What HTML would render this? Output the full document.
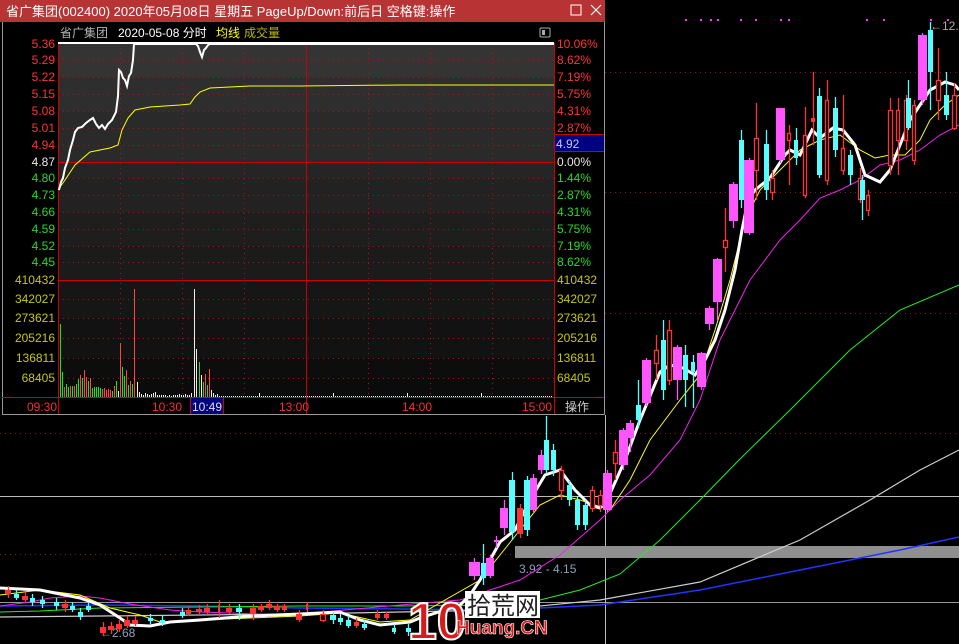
<!DOCTYPE html>
<html><head><meta charset="utf-8"><style>
html,body{margin:0;padding:0;background:#000;width:959px;height:644px;overflow:hidden}
svg{display:block}
text{font-family:"Liberation Sans","Noto Sans CJK SC",sans-serif}
</style></head><body>
<svg id="s" width="959" height="644" viewBox="0 0 959 644" xmlns="http://www.w3.org/2000/svg">
<rect width="959" height="644" fill="#000"/>
<g stroke="#8a1a1a" stroke-dasharray="1,4" stroke-width="1">
<line x1="605" y1="72.5" x2="959" y2="72.5"/>
<line x1="605" y1="192.5" x2="959" y2="192.5"/>
<line x1="605" y1="313.5" x2="959" y2="313.5"/>
<line x1="0" y1="433.5" x2="959" y2="433.5"/>
<line x1="0" y1="554.5" x2="959" y2="554.5"/>
</g>
<line x1="0" y1="496.5" x2="959" y2="496.5" stroke="#bbb"/>
<line x1="0" y1="602.5" x2="959" y2="602.5" stroke="#999" stroke-width="1"/>
<line x1="605.5" y1="415" x2="605.5" y2="644" stroke="#bbb"/>
<rect x="515" y="546" width="444" height="12" fill="#8f8f8f"/>
<text x="519" y="573" font-size="12" fill="#8aa0b8">3.92 - 4.15</text>
<text x="100" y="637" font-size="12" fill="#8aa0b8">←2.68</text>
<text x="930" y="30" font-size="12" fill="#aaa">←12.</text>
<g id="dots" fill="#ff33ff"></g>
<g id="ma"></g>
<g id="cand"></g>

<g>
<text x="408" y="639" font-size="52" font-weight="bold" fill="#d91a1a" stroke="#fff" stroke-width="2">10</text>
<rect x="465" y="591" width="75" height="27" fill="#fff"/>
<text x="467" y="614" font-size="24" fill="#222">拾荒网</text>
<text x="456" y="634" font-size="19" font-weight="bold" fill="#d91a1a" stroke="#fff" stroke-width="0.6">Huang.CN</text>
</g>

<g>
<rect x="0" y="0" width="605" height="416" fill="#000"/>
<rect x="0" y="0" width="605" height="22" fill="#b83434"/>
<text x="6" y="16" font-size="13" fill="#fff">省广集团(002400) 2020年05月08日 星期五 PageUp/Down:前后日 空格键:操作</text>
<rect x="571" y="5" width="10" height="10" fill="none" stroke="#fff"/>
<path d="M591 5L601 15M601 5L591 15" stroke="#fff" stroke-width="1.2"/>
<line x1="2.5" y1="22" x2="2.5" y2="415" stroke="#999"/>
<line x1="604.5" y1="22" x2="604.5" y2="415" stroke="#999"/>
<line x1="2" y1="414.5" x2="605" y2="414.5" stroke="#999"/>
<text x="60" y="37" font-size="12" fill="#b4b4b4">省广集团</text>
<text x="118" y="37" font-size="12" fill="#fff">2020-05-08 分时</text>
<text x="216" y="37" font-size="12" fill="#ffff00">均线</text>
<text x="244" y="37" font-size="12" fill="#b8b800">成交量</text>
<rect x="540" y="28" width="10" height="9" fill="none" stroke="#aaa" rx="1"/><rect x="542" y="30" width="3" height="5" fill="#aaa"/>
<g id="bands"></g>
<g id="pgrid"></g>
<g id="vol"></g>
<polyline fill="none" stroke="#ffff00" stroke-width="1" points="58,190 65,180 75,165 90,152 110,148 118,145 122,130 128,118 135,110 150,107 180,105 190,104 195,97 200,92 210,88 250,86 300,86 400,85 554,85"/>
<polyline fill="none" stroke="#fff" stroke-width="2" points="59,190 61,182 63,178 65,168 68,160 70,150 73,140 75,132 78,128 82,127 86,123 90,120 93,118 96,124 99,128 102,125 105,129 108,124 112,120 116,112 118,96 119,70 121,72 123,78 125,80 127,86 129,76 131,73 133,60 134,44 196,44 198,46 200,52 202,57 204,50 206,48 208,45 210,44 554,44"/>
<line x1="58" y1="43" x2="554" y2="43" stroke="#fff" stroke-width="2"/>
<g id="plabels"></g>
<rect x="555" y="135" width="49" height="16" fill="#000080"/>
<line x1="555" y1="134.5" x2="604" y2="134.5" stroke="#c00"/>
<line x1="555" y1="151.5" x2="604" y2="151.5" stroke="#c00"/>
<text x="556" y="148" font-size="12" fill="#c8c8ff">4.92</text>
<line x1="2" y1="397.5" x2="604" y2="397.5" stroke="#c00"/>
<rect x="190" y="398" width="33" height="16" fill="#000080"/>
<line x1="190.5" y1="398" x2="190.5" y2="414" stroke="#c00"/><line x1="223.5" y1="398" x2="223.5" y2="414" stroke="#c00"/>
<g font-size="12" fill="#ee3333">
<text x="27" y="411">09:30</text><text x="152" y="411">10:30</text><text x="279" y="411">13:00</text><text x="402" y="411">14:00</text><text x="522" y="411">15:00</text>
</g>
<text x="192" y="411" font-size="12" fill="#dde">10:49</text>
<text x="565" y="411" font-size="12" fill="#ccc">操作</text>
</g>
</svg>
<script>
var NS="http://www.w3.org/2000/svg";
function el(p,t,a){var e=document.createElementNS(NS,t);for(var k in a)e.setAttribute(k,a[k]);document.getElementById(p).appendChild(e);return e;}
var by=[43,77,111,162,178,212,246,280,318,358,378,397];
var bc=["#343434","#2e2e2e","#2a2a2a","#252525","#222","#1e1e1e","#1b1b1b","#161616","#121212","#0d0d0d","#0b0b0b"];
for(var i=0;i<by.length-1;i++)el("bands","rect",{x:58,y:by[i],width:496,height:by[i+1]-by[i],fill:bc[i]});
var hy=[60,77,94,111,128,145,178,195,212,229,246,262,299,318,338,358,378];
hy.forEach(function(y){el("pgrid","line",{x1:58,y1:y+.5,x2:554,y2:y+.5,stroke:"#b01010","stroke-dasharray":"1,4"})});
[162,280].forEach(function(y){el("pgrid","line",{x1:58,y1:y+.5,x2:554,y2:y+.5,stroke:"#c00"})});
[120,182,244,368,430,492].forEach(function(x){el("pgrid","line",{x1:x+.5,y1:43,x2:x+.5,y2:397,stroke:"#b01010","stroke-dasharray":"1,4"})});
[58,306,554].forEach(function(x){el("pgrid","line",{x1:x+.5,y1:43,x2:x+.5,y2:414,stroke:"#c00"})});
var L=[["5.36",48,"#ff3333","10.06%"],["5.29",64,"#ff3333","8.62%"],["5.22",81,"#ff3333","7.19%"],["5.15",98,"#ff3333","5.75%"],["5.08",115,"#ff3333","4.31%"],["5.01",132,"#ff3333","2.87%"],["4.94",149,"#ff3333",""],["4.87",166,"#e8e8e8","0.00%"],["4.80",182,"#22dd22","1.44%"],["4.73",199,"#22dd22","2.87%"],["4.66",216,"#22dd22","4.31%"],["4.59",233,"#22dd22","5.75%"],["4.52",250,"#22dd22","7.19%"],["4.45",266,"#22dd22","8.62%"],["410432",284,"#c8c800","410432"],["342027",303,"#c8c800","342027"],["273621",322,"#c8c800","273621"],["205216",342,"#c8c800","205216"],["136811",362,"#c8c800","136811"],["68405",382,"#c8c800","68405"]];
L.forEach(function(l){var t=el("plabels","text",{x:55,y:l[1],"font-size":12,fill:l[2],"text-anchor":"end"});t.textContent=l[0];
if(l[3]){var t2=el("plabels","text",{x:557,y:l[1],"font-size":12,fill:l[2]});t2.textContent=l[3];}});
var V=[[60,324,"g"],[62,372,"g"],[64,387,"r"],[66,384,"g"],[68,387,"g"],[70,386,"r"],[72,386,"g"],[74,386,"r"],[76,384,"g"],[78,379,"g"],[80,375,"r"],[82,378,"g"],[84,370,"r"],[86,377,"r"],[88,381,"g"],[90,378,"r"],[92,388,"g"],[94,387,"g"],[96,387,"g"],[98,387,"g"],[100,388,"g"],[102,389,"r"],[104,388,"r"],[106,390,"r"],[108,389,"r"],[110,390,"r"],[112,391,"g"],[114,386,"r"],[116,381,"g"],[118,391,"w"],[120,343,"r"],[122,367,"g"],[124,376,"g"],[126,370,"r"],[128,385,"g"],[130,381,"r"],[132,384,"g"],[134,289,"r"],[137,382,"w"],[139,392,"w"],[141,394,"w"],[143,395,"w"],[145,393,"w"],[147,394,"w"],[149,395,"w"],[151,394,"w"],[153,393,"w"],[155,392,"w"],[157,395,"w"],[159,395,"w"],[161,395,"w"],[163,395,"w"],[165,395,"w"],[167,396,"w"],[169,395,"w"],[171,396,"w"],[173,395,"w"],[175,395,"w"],[177,395,"w"],[179,394,"w"],[181,395,"w"],[183,395,"w"],[185,394,"w"],[187,395,"w"],[189,395,"w"],[191,393,"w"],[194,289,"w"],[196,349,"w"],[199,362,"g"],[201,375,"w"],[203,382,"g"],[205,374,"r"],[207,385,"g"],[209,369,"r"],[211,390,"w"],[213,393,"w"],[215,395,"w"],[217,394,"w"]];
for(var x=219;x<553;x+=2){V.push([x,x%37==0?393:396,"w"]);}
var vc={g:"#22dd22",r:"#ff4444",w:"#eeeeee"};
V.forEach(function(v){el("vol","rect",{x:v[0],y:v[1],width:1,height:397-v[1],fill:vc[v[2]]})});
[685,700,710,717,740,755,780,788,866,883,930,947].forEach(function(x){el("dots","rect",{x:x,y:19,width:2,height:2})});
function pl(pts,c,w){el("ma","polyline",{points:pts,fill:"none",stroke:c,"stroke-width":w})}
pl("0,606 100,605 200,606 300,608 400,609 500,610 600,605 700,590 800,570 900,550 959,537","#2233ff",1.5);
pl("0,617 100,616 300,614 500,610 600,600 700,582 800,540 870,500 920,470 959,450","#cccccc",1.2);
pl("0,612 40,611 100,608 200,607 300,606 400,606 500,605 540,600 580,590 620,574 660,540 700,500 739,460 790,410 850,350 900,310 959,285","#22ee22",1);
pl("0,606 30,602 50,598 80,596 100,598 130,604 170,610 200,612 260,614 300,614 400,605 460,600 520,580 560,555 600,520 620,500 650,475 680,440 700,400 720,340 750,280 780,240 800,220 820,198 840,190 860,180 880,165 900,160 920,150 940,135 959,125","#ee22ee",1);
pl("0,595 40,590 80,595 110,608 140,615 160,622 200,620 250,618 300,616 340,613 380,622 410,620 480,580 500,555 520,530 540,505 560,495 580,500 610,510 630,480 650,440 680,400 700,375 715,330 730,280 745,220 760,190 780,170 800,150 820,140 840,135 860,150 875,158 890,155 905,155 920,140 930,120 945,105 959,95","#ffff00",1);
pl("0,588 40,590 80,598 100,605 120,618 130,625 150,626 170,622 200,620 250,616 300,614 340,612 360,620 380,625 410,622 420,618 460,605 470,595 480,580 490,560 500,542 515,530 530,500 545,475 560,470 575,490 590,505 600,508 608,498 617,478 625,460 640,420 660,372 670,365 683,368 695,375 705,360 715,340 725,310 735,270 742,230 748,200 755,190 770,178 785,155 790,150 800,155 812,130 820,138 833,128 843,130 855,145 865,175 880,182 890,170 900,145 910,120 920,105 930,90 945,82 955,85 959,90","#ffffff",3);
var C=[
[5,6,590,594,586,598,"F"],[14,5,594,598,590,600,"C"],[22,6,596,600,592,602,"F"],[30,5,598,602,594,606,"C"],[40,5,600,604,596,608,"C"],[54,5,602,606,598,610,"C"],[62,6,604,608,600,612,"F"],[70,5,606,610,602,612,"C"],[78,5,612,617,608,620,"C"],[86,5,606,610,602,612,"C"],[100,6,627,633,622,636,"F"],[108,6,626,630,622,634,"F"],[116,6,624,629,620,632,"F"],[124,6,620,626,616,628,"F"],[132,6,620,624,616,626,"F"],[148,5,618,621,614,624,"C"],[160,5,620,623,616,626,"C"],[180,5,612,616,608,618,"C"],[186,5,610,614,606,616,"F"],[196,6,609,612,605,614,"F"],[204,6,608,612,604,614,"F"],[218,2,605,612,600,618,"F"],[226,6,608,612,604,614,"F"],[236,6,608,612,604,620,"C"],[250,6,608,614,604,620,"F"],[258,6,606,610,604,612,"F"],[266,6,604,608,600,610,"F"],[274,6,606,610,604,612,"F"],[282,5,606,610,604,612,"F"],[296,6,614,620,610,622,"F"],[306,2,604,610,602,612,"F"],[320,6,614,620,610,622,"R"],[330,6,615,620,612,624,"C"],[338,5,618,622,614,625,"C"],[346,5,620,626,616,628,"C"],[354,5,622,626,618,628,"F"],[362,5,624,628,620,630,"C"],[375,5,614,618,610,620,"F"],[384,5,614,618,612,620,"F"],[392,4,628,632,624,634,"C"],[406,5,628,632,624,636,"C"],
[469,11,562,576,558,580,"P"],[481,5,563,578,544,585,"C"],[486,8,558,576,555,578,"P"],[494,5,540,542,536,548,"P"],
[500,8,508,528,500,535,"P"],[509,6,480,532,472,540,"C"],[517,6,508,534,504,538,"F"],[524,6,480,530,476,536,"C"],[530,7,478,510,474,512,"P"],[538,7,455,470,450,474,"P"],[544,5,440,470,410,474,"C"],[551,5,450,470,444,476,"C"],[559,5,470,490,466,500,"R"],[567,5,485,500,480,506,"C"],[575,5,500,525,496,530,"C"],[583,5,505,525,500,530,"C"],[590,5,490,508,486,512,"R"],[598,5,495,505,490,512,"R"],
[603,9,473,510,470,512,"P"],[613,5,452,463,440,480,"R"],[619,9,430,465,428,470,"P"],[626,8,423,438,420,452,"P"],[636,5,405,420,380,428,"C"],[642,9,360,403,358,406,"P"],[654,5,350,363,335,380,"R"],[661,5,340,390,320,400,"C"],[667,5,330,380,320,385,"R"],[673,9,347,380,345,400,"P"],[683,5,355,380,345,407,"C"],[691,4,362,372,355,408,"C"],[697,9,353,387,352,390,"P"],[705,9,308,324,306,330,"P"],[713,9,259,302,258,320,"P"],[723,5,240,247,208,272,"R"],[729,9,184,221,182,228,"P"],[739,5,140,200,130,208,"C"],[744,10,160,233,158,235,"P"],[754,5,138,170,103,200,"R"],[764,5,144,190,130,200,"C"],[770,5,178,192,170,200,"R"],[776,9,108,160,108,163,"P"],[787,4,133,140,125,185,"R"],[794,4,140,158,128,165,"C"],[803,4,135,195,107,198,"R"],[811,4,118,122,72,145,"F"],[817,5,96,175,88,178,"C"],[825,4,100,180,80,185,"R"],[833,5,108,150,97,157,"C"],[841,4,148,170,95,175,"R"],[848,5,155,175,150,185,"C"],[858,4,178,199,168,203,"R"],[860,5,180,200,175,220,"C"],[866,4,195,210,190,216,"R"],[888,5,110,165,98,175,"R"],[896,4,110,140,98,175,"R"],[904,4,100,140,95,150,"R"],[906,5,98,128,80,130,"C"],[912,4,105,160,100,165,"R"],[918,9,35,100,33,105,"P"],[928,5,30,72,22,110,"C"],[936,5,80,100,48,120,"R"],[944,5,95,115,72,120,"C"],[952,5,95,128,83,130,"R"]];
var col={P:"#ff55ff",C:"#55ffff",R:"#ff3333",F:"#ff3333"};
C.forEach(function(c){var x=c[0],w=c[1],cx=x+Math.floor(w/2)+.5,k=col[c[6]];
el("cand","line",{x1:cx,y1:c[4],x2:cx,y2:c[5],stroke:k,"stroke-width":1.3});
if(c[6]=="R")el("cand","rect",{x:x+.5,y:c[2]+.5,width:w-1,height:c[3]-c[2],fill:"#000",stroke:k,"stroke-width":1.3});
else el("cand","rect",{x:x,y:c[2],width:w,height:Math.max(1,c[3]-c[2]),fill:k});});
</script>
</body></html>
